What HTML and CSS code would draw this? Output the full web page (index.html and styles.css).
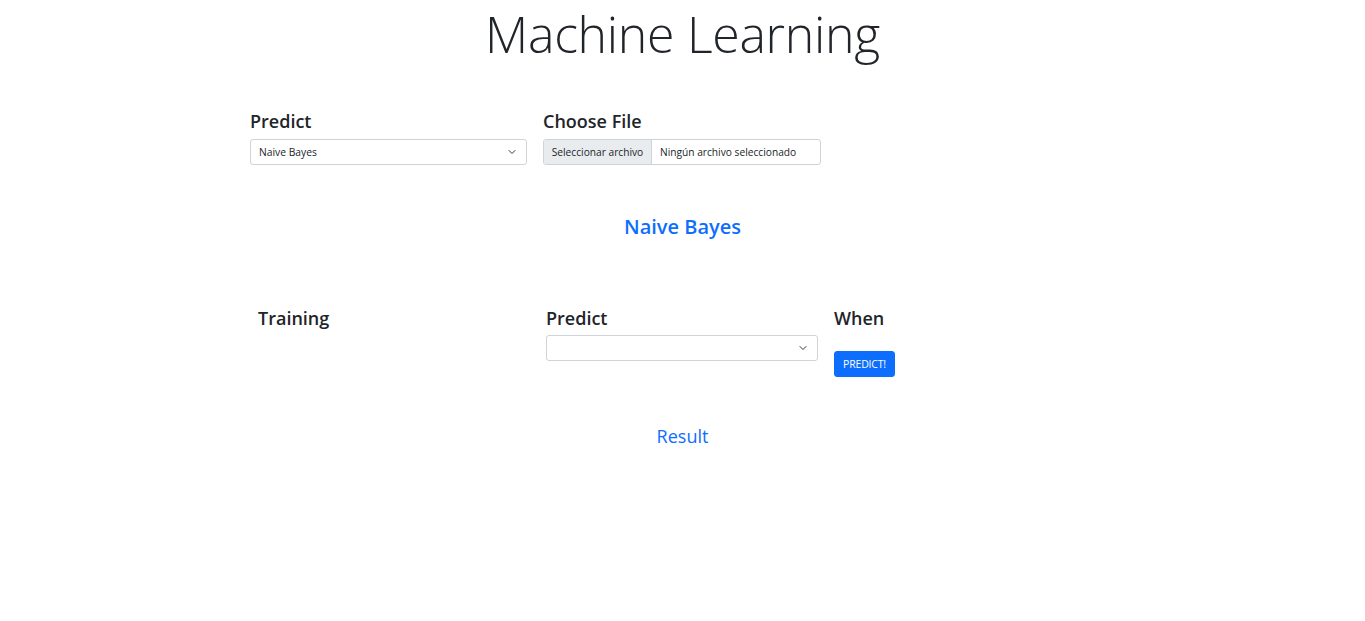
FILE: index.html
```html
<!DOCTYPE html>
<html lang="es">
<head>
<meta charset="utf-8">
<title>Machine Learning</title>
<link rel="stylesheet" href="styles.css">
</head>
<body>
<main class="page">
  <h1 class="title">Machine Learning</h1>

  <section class="row-top">
    <div class="field field-predict">
      <h5 class="label">Predict</h5>
      <div class="select">
        <span class="select-text">Naive Bayes</span>
        <svg class="chevron" width="10" height="8" viewBox="0 0 16 16"><path d="M2 5l6 6 6-6" fill="none" stroke="#343a40" stroke-width="2" stroke-linecap="round" stroke-linejoin="round"/></svg>
      </div>
    </div>
    <div class="field field-file">
      <h5 class="label">Choose File</h5>
      <div class="file">
        <span class="file-btn">Seleccionar archivo</span>
        <span class="file-name">Ningún archivo seleccionado</span>
      </div>
    </div>
  </section>

  <h5 class="section-title algo">Naive Bayes</h5>

  <section class="row-bottom">
    <div class="col">
      <h5 class="label">Training</h5>
    </div>
    <div class="col">
      <h5 class="label">Predict</h5>
      <div class="select">
        <span class="select-text"></span>
        <svg class="chevron" width="10" height="8" viewBox="0 0 16 16"><path d="M2 5l6 6 6-6" fill="none" stroke="#343a40" stroke-width="2" stroke-linecap="round" stroke-linejoin="round"/></svg>
      </div>
    </div>
    <div class="col">
      <h5 class="label">When</h5>
      <button class="btn" type="button">PREDICT!</button>
    </div>
  </section>

  <h5 class="section-title result">Result</h5>
</main>
</body>
</html>
```

FILE: styles.css
```css
* { box-sizing: border-box; }
html, body { margin: 0; padding: 0; background: #fff; }
body {
  font-family: "Open Sans", "Noto Sans", "Liberation Sans", sans-serif;
  color: #212529;
}
.page { width: 1365px; }
.title {
  margin: 0;
  text-align: center;
  font-weight: 300;
  font-size: 50px;
  line-height: 68px;
  letter-spacing: -0.3px;
  color: #212529;
}
.label {
  margin: 0 0 6px 0;
  font-size: 18px;
  font-weight: 600;
  line-height: 1.2;
  color: #212529;
}
.row-top {
  display: flex;
  gap: 16px;
  margin: 43px 0 0 250px;
}
.field-predict { width: 277px; }
.field-file { width: 278px; }
.select {
  height: 26px;
  border: 1px solid #ced4da;
  border-radius: 3px;
  display: flex;
  align-items: center;
  justify-content: space-between;
  padding: 0 8px;
  font-size: 10.3px;
  color: #212529;
  background: #fff;
}
.chevron { margin-right: 1px; }
.file {
  height: 26px;
  border: 1px solid #ced4da;
  border-radius: 3px;
  display: flex;
  align-items: stretch;
  font-size: 10.2px;
  overflow: hidden;
}
.file-btn {
  background: #e9ecef;
  border-right: 1px solid #ced4da;
  width: 108px;
  display: flex;
  align-items: center;
  justify-content: center;
  color: #212529;
}
.file-name {
  display: flex;
  align-items: center;
  padding-left: 8px;
  color: #212529;
}
.section-title {
  margin: 0;
  text-align: center;
  color: #0d6efd;
  line-height: 1.2;
}
.algo {
  font-size: 20px;
  font-weight: 600;
  margin-top: 50px;
}
.row-bottom {
  display: flex;
  width: 864px;
  margin: 69px 0 0 250px;
}
.row-bottom .col {
  width: 288px;
  padding: 0 0 0 8px;
}
.row-bottom .col .select { width: 272px; }
.btn {
  margin-top: 16px;
  height: 26px;
  width: 61px;
  padding: 0;
  border: 1px solid #0d6efd;
  border-radius: 3px;
  background: #0d6efd;
  color: #fff;
  font-family: inherit;
  font-size: 10.5px;
  letter-spacing: -0.2px;
}
.result {
  font-size: 18px;
  font-weight: 500;
  margin-top: 49px;
}
```
